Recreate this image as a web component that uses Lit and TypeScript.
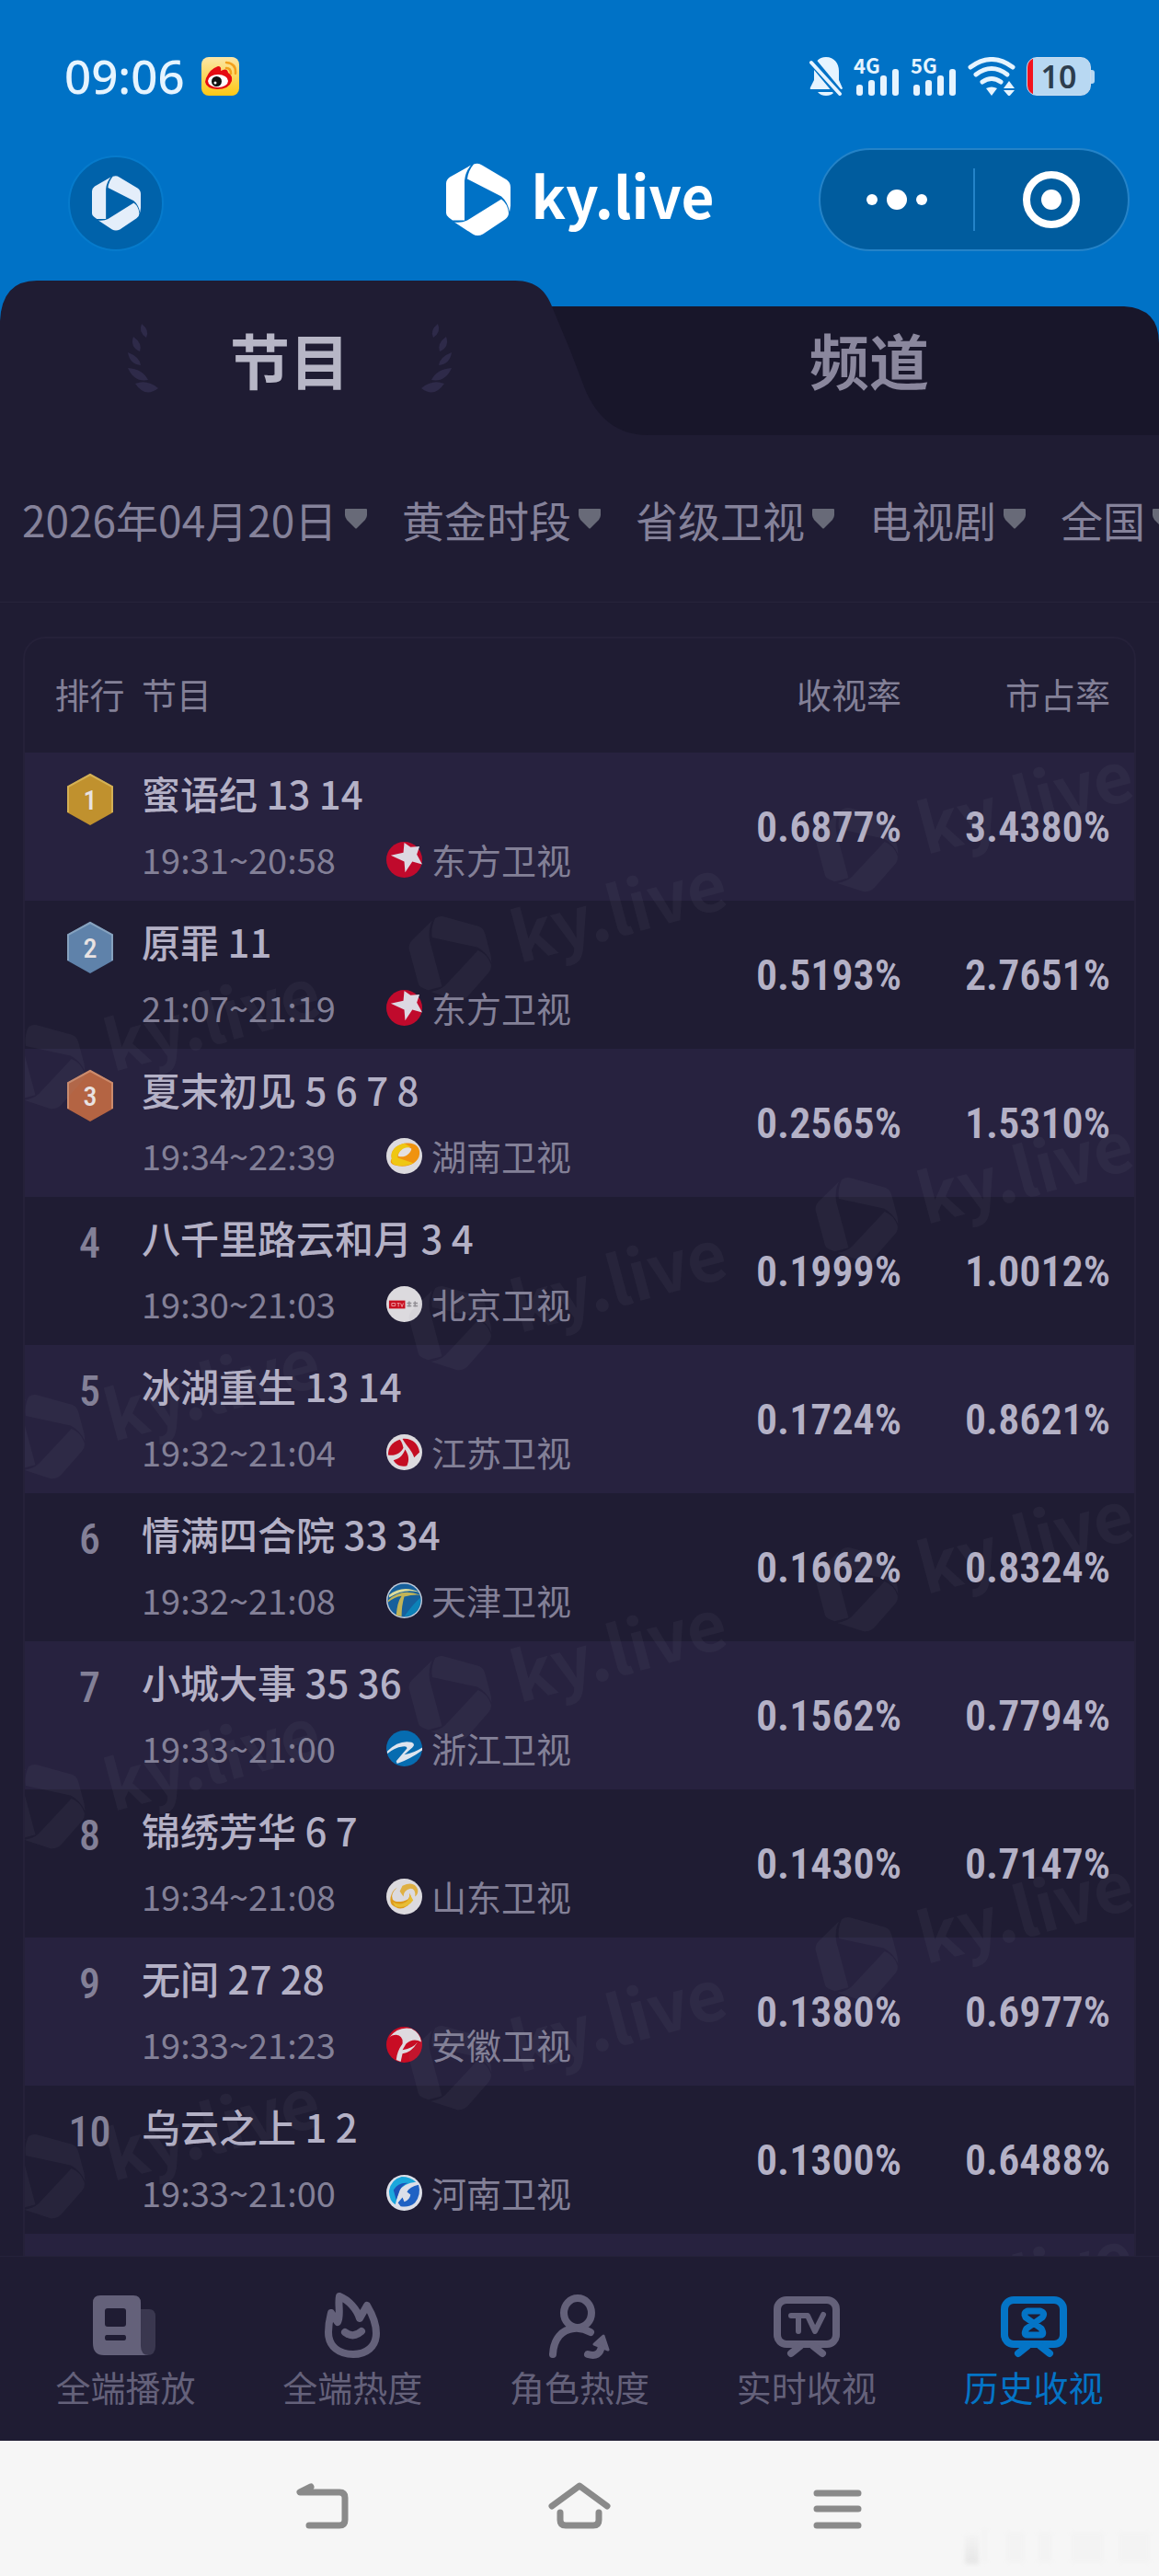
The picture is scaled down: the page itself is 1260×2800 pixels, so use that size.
import { LitElement, html, svg, css } from "lit";
import { customElement, state } from "lit/decorators.js";

interface Show {
  title: string;
  time: string;
  channel: string;
  rate: string;
  share: string;
}

const SHOWS: Show[] = [
  { title: "蜜语纪 13 14", time: "19:31~20:58", channel: "东方卫视", rate: "0.6877%", share: "3.4380%" },
  { title: "原罪 11", time: "21:07~21:19", channel: "东方卫视", rate: "0.5193%", share: "2.7651%" },
  { title: "夏末初见 5 6 7 8", time: "19:34~22:39", channel: "湖南卫视", rate: "0.2565%", share: "1.5310%" },
  { title: "八千里路云和月 3 4", time: "19:30~21:03", channel: "北京卫视", rate: "0.1999%", share: "1.0012%" },
  { title: "冰湖重生 13 14", time: "19:32~21:04", channel: "江苏卫视", rate: "0.1724%", share: "0.8621%" },
  { title: "情满四合院 33 34", time: "19:32~21:08", channel: "天津卫视", rate: "0.1662%", share: "0.8324%" },
  { title: "小城大事 35 36", time: "19:33~21:00", channel: "浙江卫视", rate: "0.1562%", share: "0.7794%" },
  { title: "锦绣芳华 6 7", time: "19:34~21:08", channel: "山东卫视", rate: "0.1430%", share: "0.7147%" },
  { title: "无间 27 28", time: "19:33~21:23", channel: "安徽卫视", rate: "0.1380%", share: "0.6977%" },
  { title: "乌云之上 1 2", time: "19:33~21:00", channel: "河南卫视", rate: "0.1300%", share: "0.6488%" },
];

const FILTERS = [
  { name: "日期", value: "2026年04月20日" },
  { name: "时段", value: "黄金时段" },
  { name: "频道组", value: "省级卫视" },
  { name: "类型", value: "电视剧" },
  { name: "地区", value: "全国" },
];

const MEDALS = [
  { fill: "#c0912e", rim: "#d3b055" },
  { fill: "#5f82aa", rim: "#86a2bf" },
  { fill: "#b46443", rim: "#cc8b6c" },
];

/* Folded-ribbon hexagon, 70 x 79 units */
const markPaths = svg`
  <path d="M27 2 L4 15 Q0 18 0 22 V54 Q0 57 3 59 L7 62 H20 V19 Q21 9 27 2Z"/>
  <path d="M30 1 Q35 -1 39 2 L66 18 Q70 21 70 26 V46 L69 53 Q67 42 60 36 L23 17 Q24 8 30 1Z"/>
  <path d="M60 39 Q67 44 68 54 Q68 58 64 61 L40 77 Q34 80 29 77 L9 64 Q17 65 23 62Z"/>`;

const CHANNEL_ART: Record<string, unknown> = {
  东方卫视: svg`
    <circle cx="20" cy="20" r="20" fill="#c00a2c"/>
    <path d="M20 1 L27 6 L37 5 L34 14 L40 25 L29 22 L21 34 L20 22 L5 15 L19 12Z" fill="#dcd8e2"/>`,
  湖南卫视: svg`
    <circle cx="20" cy="20" r="20" fill="#dcdade"/>
    <path d="M20 6 C32 4 38 10 37 18 C36 28 24 33 13 31 C6 30 3 27 6 23 C4 14 11 8 20 6Z" fill="#f0930f"/>
    <path d="M6 23 C4 14 11 8 20 6 L27 10 C16 12 11 18 13 22 L30 28 C20 33 3 32 6 23Z" fill="#efc713"/>
    <path d="M13 20 C14 13 23 8 28 12 C27 18 19 23 13 20Z" fill="#e4e0e0"/>`,
  北京卫视: svg`
    <circle cx="20" cy="20" r="20" fill="#dcdade"/>
    <rect x="3" y="16" width="18" height="9" fill="#c81020"/>
    <path d="M6 19h4v3h-4z M12 19h3 M13.5 19v4 M16 19l1.5 4l1.5-4" fill="none" stroke="#ec9aa0" stroke-width="1"/>
    <path d="M23 19h5 M25.500 17v6 M23 22h5 M30 19h5 M32 17v6 M30 22h5" stroke="#918e94" stroke-width="1.500"/>`,
  江苏卫视: svg`
    <circle cx="20" cy="20" r="20" fill="#dcdade"/>
    <path d="M15 6 C6 9 2 15 2 23 C9 25 17 20 19 15 C18 11 17 8 15 6Z" fill="#c40d22"/>
    <path d="M18 5 C29 4 36 11 37 20 L31 26 C29 18 23 14 18 5Z" fill="#c40d22"/>
    <path d="M8 29 C16 27 19 22 21 17 C25 23 26 29 23 35 C16 37 11 34 8 29Z" fill="#c40d22"/>`,
  天津卫视: svg`
    <circle cx="20" cy="20" r="20" fill="#c3cddc"/>
    <circle cx="20" cy="20" r="18.500" fill="#17609c"/>
    <path d="M20 38 A18 18 0 0 0 38 17 Q30 24 20 38Z" fill="#0c82b8"/>
    <path d="M3 14 Q18 2 37 11 Q20 6 3 17Z" fill="#dcdc9a"/>
    <path d="M2 20 Q16 6 38 14 Q30 13 20 16 Q17 26 17 38 L11 37 Q12 22 17 15 Q9 16 2 22Z" fill="#c2b457"/>`,
  浙江卫视: svg`
    <circle cx="20" cy="20" r="20" fill="#066cb0"/>
    <path d="M1 23 Q14 10 28 13 Q33 15 29 19 L20 27 Q31 25 40 19 V22 Q28 31 12 37 L11 34 L23 20 Q23 17 18 18 Q9 19 1 26Z" fill="#dde4ee"/>`,
  山东卫视: svg`
    <circle cx="20" cy="20" r="20" fill="#dcdade"/>
    <path d="M12 10 Q4 17 7 23 Q10 27 19 25 Q27 24 26 16 Q30 24 24 30 Q15 37 6 29 Q3 24 6 17 Q8 12 12 10Z" fill="#dd9a1c"/>
    <path d="M7 26 Q14 30 20 27 Q27 24 26 17 L30 24 Q23 34 10 31Z" fill="#e7bd35"/>
    <path d="M18 8 Q31 2 35 12 Q36 17 32 20 Q33 11 27 11 Q19 13 19 20 L15 14Z" fill="#dfb043"/>`,
  安徽卫视: svg`
    <circle cx="20" cy="20" r="20" fill="#c80c24"/>
    <path d="M3 12 Q13 -1 28 2 Q38 7 39 17 Q30 12 22 19 L18 26 Q30 24 35 17 Q28 29 18 30 L16 39 L11 37 Q12 27 18 19 Q19 10 11 9 Q6 9 3 12Z" fill="#dedadf"/>`,
  河南卫视: svg`
    <circle cx="20" cy="20" r="20" fill="#dcdfe8"/>
    <path d="M17 2 Q5 5 3 18 Q3 29 10 33 L14 18 Q20 9 33 8 Q27 2 17 2Z" fill="#1aa7dc"/>
    <path d="M36 11 Q39 22 32 31 Q25 37 16 35 L13 31 L18 25 L20 30 Q26 28 27 22 L23 19 Q26 13 36 11Z" fill="#1f62c4"/>
    <path d="M8 17 Q13 8 24 9 Q16 12 14 20 L11 28Z" fill="#1c52b8"/>`,
};

const NAV = [
  {
    label: "全端播放",
    art: svg`
      <path d="M52 20 H62 Q69 20 69 28 V60 Q69 70 60 70 H50Z" fill="currentColor" opacity=".4"/>
      <path fill-rule="evenodd" d="M9 5 H45 Q53 5 53 13 V60 Q53 70 62 70 H13 Q1 70 1 57 V13 Q1 5 9 5Z
        M17 19 Q14 19 14 22 V36 Q14 39 17 39 H34 Q37 39 37 36 V22 Q37 19 34 19Z
        M16 48 Q14 48 14 51 Q14 54 16 54 H35 Q37 54 37 51 Q37 48 35 48Z" fill="currentColor"/>`,
  },
  {
    label: "全端热度",
    art: svg`
      <g fill="none" stroke="currentColor" stroke-width="8" stroke-linecap="round" stroke-linejoin="round">
        <path d="M22 6 C32 10 41 20 44 30 L52 16 C58 26 62 37 62 46 C62 61 51 69 37 69 C22 69 10 61 10 45 C10 35 12 28 13 24 L20 34 C24 27 20 14 22 6Z"/>
        <path d="M28 45 Q37 52 46 44"/>
      </g>`,
  },
  {
    label: "角色热度",
    art: svg`
      <g fill="none" stroke="currentColor" stroke-width="8" stroke-linecap="round" stroke-linejoin="round">
        <ellipse cx="34" cy="24" rx="15" ry="16"/>
        <path d="M7 69 C8 52 17 42 30 41 Q39 40 48 45"/>
        <path d="M45 69 Q58 73 60 60"/>
      </g>
      <path d="M62 49 L67 64 L52 58Z" fill="currentColor" stroke="currentColor" stroke-width="3" stroke-linejoin="round"/>`,
  },
  {
    label: "实时收视",
    art: svg`
      <g fill="none" stroke="currentColor" stroke-linecap="round" stroke-linejoin="round">
        <rect x="4" y="10" width="64" height="48" rx="10" stroke-width="8"/>
        <path d="M29 60 L19 68 M43 60 L53 68" stroke-width="8"/>
        <path d="M19 27 H36 M27 27 V44 M37 27 L45 44 L54 26" stroke-width="6"/>
      </g>`,
  },
  {
    label: "历史收视",
    art: svg`
      <g fill="none" stroke="currentColor" stroke-linecap="round" stroke-linejoin="round">
        <rect x="4" y="10" width="64" height="48" rx="10" stroke-width="8"/>
        <path d="M29 60 L19 68 M43 60 L53 68" stroke-width="8"/>
        <path d="M29 22 H43 Q49 24 45 29 L28 41 Q24 48 29 48 H43 Q48 48 44 41 L27 29 Q24 24 29 22Z" stroke-width="7"/>
      </g>`,
  },
];

@customElement("brand-mark")
export class BrandMark extends LitElement {
  static styles = css`
    :host { display: block; }
    svg { display: block; width: 100%; height: 100%; fill: currentColor; }
  `;
  render() {
    return html`<svg viewBox="0 0 70 79" aria-hidden="true">${markPaths}</svg>`;
  }
}

@customElement("status-bar")
export class StatusBar extends LitElement {
  static styles = css`
    :host {
      display: flex;
      align-items: center;
      justify-content: space-between;
      height: 156px;
      padding: 5px 70px 0;
      color: #e6f4ff;
    }
    .side { display: flex; align-items: center; gap: 12px; }
    .clock { font: 500 51px/56px "Noto Sans", "Open Sans", sans-serif; padding-bottom: 2px; }
    .app { margin-left: 6px; }
    svg { display: block; }
    .net {
      display: grid;
      font: 700 22px/22px "Noto Sans CJK SC", sans-serif;
    }
    .net span, .net svg { grid-area: 1 / 1; }
    .net span { align-self: start; margin-top: -3px; }
    .battery { display: flex; align-items: center; }
    .cell {
      display: grid;
      place-items: center;
      width: 70px;
      height: 42px;
      box-sizing: border-box;
      border-radius: 11px;
      background: linear-gradient(90deg, #f2121e 6px, #b8d8f2 6px);
      border: 1px solid #c9dcf0;
      color: #2d3d4e;
      font: 600 34px/40px "Noto Sans", sans-serif;
    }
    .nub { width: 4px; height: 15px; border-radius: 0 3px 3px 0; background: #b8d8f2; }
  `;

  private network(label: string) {
    return html`
      <div class="net">
        <span>${label}</span>
        <svg width="50" height="42" viewBox="0 0 50 42" fill="currentColor" aria-hidden="true">
          <rect x="3" y="30" width="7" height="12" rx="3"/>
          <rect x="16" y="25" width="7" height="17" rx="3"/>
          <rect x="29" y="20" width="7" height="22" rx="3"/>
          <rect x="42" y="13" width="7" height="29" rx="3"/>
        </svg>
      </div>`;
  }

  render() {
    return html`
      <div class="side">
        <span class="clock">09:06</span>
        <svg class="app" width="41" height="42" viewBox="0 0 41 42" aria-hidden="true">
          <defs>
            <linearGradient id="wb" x1="0" y1="0" x2="0" y2="1">
              <stop offset="0" stop-color="#fbe6a8"/><stop offset="1" stop-color="#fdc813"/>
            </linearGradient>
          </defs>
          <rect width="41" height="42" rx="8" fill="url(#wb)"/>
          <path d="M5 23 Q9 13 18 10 Q22 10 21 15 Q28 11 29 17 Q34 20 33 26 Q30 35 17 35 Q5 34 4 27Z" fill="#e50b12"/>
          <ellipse cx="18" cy="26" rx="11" ry="7" fill="#fff"/>
          <circle cx="16.500" cy="26.500" r="5.500" fill="#111"/>
          <circle cx="15" cy="28" r="1.500" fill="#fff"/>
          <path d="M27 6 Q38 7 37 18 M27 12 Q32 12 32 18" fill="none" stroke="#f3a01c" stroke-width="2.500" stroke-linecap="round"/>
        </svg>
      </div>
      <div class="side">
        <svg width="36" height="42" viewBox="0 0 36 42" aria-hidden="true">
          <path d="M18 0 C27 0 32 7 32 15 V25 L36 34 Q36 35 34 35 H2 Q0 35 1 33 L5 25 V13 C5 6 10 0 18 0Z M9 38 H27 Q24 42 18 42 Q12 42 9 38Z" fill="currentColor"/>
          <path d="M0 1 L35 43" stroke="#0072c6" stroke-width="9"/>
          <path d="M2 6 L33 40" stroke="currentColor" stroke-width="4" stroke-linecap="round"/>
        </svg>
        ${this.network("4G")}
        ${this.network("5G")}
        <svg width="52" height="42" viewBox="0 0 52 42" aria-hidden="true">
          <g fill="none" stroke="currentColor" stroke-width="5" stroke-linecap="round">
            <path d="M3 11 Q26 -6 49 11"/>
            <path d="M9 19 Q26 6 43 19"/>
            <path d="M16 27 Q26 20 36 27"/>
          </g>
          <path d="M20 34 Q26 31 32 34 L26 42Z M39 34 L45 26 L51 34Z M39 36 H51 L45 43Z" fill="currentColor"/>
        </svg>
        <div class="battery"><div class="cell">10</div><div class="nub"></div></div>
      </div>`;
  }
}

@customElement("ranking-table")
export class RankingTable extends LitElement {
  static styles = css`
    :host {
      display: block;
      position: relative;
      overflow: hidden;
      border: 2px solid #252139;
      border-bottom: 0;
      border-radius: 24px 24px 0 0;
      color: #b4b1c6;
    }
    table { width: 100%; border-collapse: collapse; table-layout: fixed; }
    th, td { box-sizing: border-box; padding: 0; }
    .c-rank { width: 127px; }
    .c-rate { width: 220px; }
    .c-share { width: 253px; }
    th {
      height: 124px;
      padding-bottom: 4px;
      font-size: 38px;
      font-weight: 400;
      line-height: 56px;
      text-align: left;
      color: #838097;
    }
    td { height: 161px; vertical-align: top; }
    tbody tr:nth-child(odd) { background: #27223f; }
    .rank { padding-left: 14px; text-align: center; }
    .num { text-align: right; }
    .share { padding-right: 26px; }
    td.rank { padding-top: 22px; }
    td.num {
      vertical-align: middle;
      font: 600 46px/56px "Roboto Condensed", "Liberation Sans Narrow", Roboto, sans-serif;
    }
    .place {
      display: block;
      font: 500 46px/56px "Roboto Condensed", "Liberation Sans Narrow", Roboto, sans-serif;
      color: #838097;
    }
    .medal { display: block; margin: 0 auto; }
    .medal text { font: 500 30px "Roboto Condensed", Roboto, sans-serif; fill: #e8e2e2; text-anchor: middle; }
    td.show { padding-top: 14px; }
    .title { font-size: 42px; font-weight: 500; line-height: 60px; white-space: nowrap; }
    .meta {
      display: flex;
      align-items: center;
      margin-top: 12px;
      font-size: 38px;
      line-height: 60px;
      color: #838097;
      white-space: nowrap;
    }
    .time { width: 266px; }
    .logo { display: block; width: 39px; height: 39px; margin-right: 10px; }
    .watermark {
      position: absolute;
      inset: 0;
      width: 100%;
      height: 100%;
      fill: #8f92a0;
      opacity: 0.07;
      pointer-events: none;
    }
    .watermark text { font: 700 62px "Noto Sans CJK SC", sans-serif; }
  `;

  private place(i: number) {
    const medal = MEDALS[i];
    if (!medal) return html`<span class="place">${i + 1}</span>`;
    return html`
      <svg class="medal" width="52" height="58" viewBox="0 0 52 58">
        <path d="M26 1 L51 15 V43 L26 57 L1 43 V15Z" fill="${medal.fill}"/>
        <path d="M2 43 V15 L26 2 L50 15 V43" fill="none" stroke="${medal.rim}" stroke-width="2"/>
        <text x="26" y="40">${i + 1}</text>
      </svg>`;
  }

  private stamps() {
    const out = [];
    for (let row = 0; row < 5; row++) {
      for (let col = 0; col < 3; col++) {
        const x = 22 + col * 442;
        const y = 466 - col * 118 + row * 402;
        out.push(svg`
          <g transform="translate(${x} ${y}) rotate(-15) scale(1.2)">
            <g transform="translate(-35 -40)">${markPaths}</g>
            <text x="58" y="20">ky.live</text>
          </g>`);
      }
    }
    return out;
  }

  render() {
    return html`
      <table>
        <colgroup>
          <col class="c-rank" /><col /><col class="c-rate" /><col class="c-share" />
        </colgroup>
        <thead>
          <tr>
            <th class="rank" scope="col">排行</th>
            <th scope="col">节目</th>
            <th class="num" scope="col">收视率</th>
            <th class="num share" scope="col">市占率</th>
          </tr>
        </thead>
        <tbody>
          ${SHOWS.map(
            (s, i) => html`
              <tr>
                <td class="rank">${this.place(i)}</td>
                <td class="show">
                  <div class="title">${s.title}</div>
                  <div class="meta">
                    <span class="time">${s.time}</span>
                    <svg class="logo" viewBox="0 0 40 40" aria-hidden="true">${CHANNEL_ART[s.channel]}</svg>
                    <span>${s.channel}</span>
                  </div>
                </td>
                <td class="num">${s.rate}</td>
                <td class="num share">${s.share}</td>
              </tr>`
          )}
          <tr aria-hidden="true"><td colspan="4"></td></tr>
        </tbody>
      </table>
      <svg class="watermark" aria-hidden="true">${this.stamps()}</svg>`;
  }
}

@customElement("app-root")
export class AppRoot extends LitElement {
  static styles = css`
    :host {
      display: flex;
      flex-direction: column;
      height: 100vh;
      overflow: hidden;
      background: #1f1c33;
      color: #b4b1c6;
      font-family: "Noto Sans CJK SC", sans-serif;
    }
    button, select { font: inherit; color: inherit; background: none; border: 0; padding: 0; margin: 0; }
    svg { display: block; }
    .top { flex: none; background: #0072c6; color: #fff; }
    .bar {
      display: grid;
      grid-template-columns: 1fr auto 1fr;
      align-items: center;
      height: 112px;
      padding: 0 32px 0 74px;
      margin-bottom: 32px;
    }
    .home {
      display: grid;
      place-items: center;
      align-self: end;
      width: 104px;
      height: 104px;
      box-sizing: border-box;
      border: 2px solid #067bcc;
      border-radius: 50%;
      background: #0062aa;
      color: #e4eefa;
    }
    .home brand-mark { width: 53px; height: 60px; }
    .brand { display: flex; align-items: center; gap: 22px; margin-right: 40px; }
    .brand brand-mark { width: 70px; height: 80px; }
    .brand span { font-size: 62px; font-weight: 700; line-height: 80px; padding-bottom: 12px; }
    .capsule {
      justify-self: end;
      display: flex;
      align-items: center;
      box-sizing: border-box;
      width: 338px;
      height: 112px;
      border: 2px solid #2483c8;
      border-radius: 56px;
      background: #005c9e;
    }
    .capsule button { flex: 1; display: grid; place-items: center; height: 100%; }
    .rule { width: 2px; height: 68px; background: #2483c8; }
    .tabs { position: relative; display: grid; grid-template-columns: 1fr 1fr; height: 168px; }
    .shape { position: absolute; inset: 0; width: 100%; height: 100%; }
    .tab {
      position: relative;
      display: flex;
      align-items: center;
      justify-content: center;
      gap: 78px;
      padding-top: 2px;
      font-size: 65px;
      font-weight: 700;
      line-height: 80px;
      color: #8a879d;
    }
    .tab[aria-selected="true"] { color: #b7b6c6; }
    .right { transform: scaleX(-1); }
    .filters {
      flex: none;
      display: flex;
      align-items: center;
      gap: 38px;
      height: 181px;
      padding-left: 24px;
      overflow: hidden;
      border-bottom: 1px solid #27243b;
    }
    .filter { flex: none; display: flex; align-items: center; gap: 8px; color: #85829a; }
    .filter select { appearance: none; font-size: 46px; line-height: 64px; height: 64px; padding-bottom: 2px; }
    .list { flex: 1; min-height: 0; overflow: hidden; padding: 37px 25px 0; }
    .nav {
      flex: none;
      display: grid;
      grid-template-columns: repeat(5, 1fr);
      height: 200px;
      padding: 0 13px;
      border-top: 1px solid #25223a;
    }
    .nav a {
      display: flex;
      flex-direction: column;
      align-items: center;
      padding-top: 37px;
      color: #64617a;
      font-size: 38px;
      line-height: 56px;
      text-decoration: none;
    }
    .nav a[aria-current="page"] { color: #0474c6; }
    .system {
      flex: none;
      position: relative;
      display: flex;
      align-items: center;
      justify-content: center;
      gap: 208px;
      height: 147px;
      background: #f6f6f6;
      color: #8a8a8a;
    }
    .system button { margin-bottom: 6px; }
    .smear { position: absolute; right: 0; bottom: 10px; opacity: 0.4; }
  `;

  @state() private tab = 0;
  @state() private page = 4;

  private laurel(side: string) {
    return html`
      <svg class=${side} width="36" height="78" viewBox="0 0 36 78" fill="#2e2a49" aria-hidden="true">
        <path d="M18 1 Q27 8 23 16 Q14 10 18 1Z"/>
        <path d="M9 15 Q19 22 16 31 Q5 26 9 15Z"/>
        <path d="M3 32 Q16 37 17 46 Q5 45 3 32Z"/>
        <path d="M3 49 Q19 50 25 62 Q10 65 3 49Z"/>
        <path d="M11 66 Q24 61 36 71 Q22 82 11 66Z"/>
      </svg>`;
  }

  render() {
    return html`
      <header class="top">
        <status-bar></status-bar>
        <div class="bar">
          <button class="home" aria-label="主页"><brand-mark></brand-mark></button>
          <div class="brand"><brand-mark></brand-mark><span>ky.live</span></div>
          <div class="capsule">
            <button aria-label="更多">
              <svg width="66" height="22" viewBox="0 0 66 22" fill="#fff">
                <circle cx="6" cy="11" r="6"/><circle cx="33" cy="11" r="11"/><circle cx="60" cy="11" r="6"/>
              </svg>
            </button>
            <span class="rule"></span>
            <button aria-label="关闭">
              <svg width="62" height="62" viewBox="0 0 62 62">
                <circle cx="31" cy="31" r="27" fill="none" stroke="#fff" stroke-width="8"/>
                <circle cx="31" cy="31" r="11" fill="#fff"/>
              </svg>
            </button>
          </div>
        </div>
        <div class="tabs" role="tablist">
          <svg class="shape" viewBox="0 0 1260 168" preserveAspectRatio="none" aria-hidden="true">
            <path d="M540 28 H1222 Q1260 30 1260 68 V168 H540Z" fill="#18162a"/>
            <path d="M0 44 Q2 0 40 0 H560 C583 0 594 12 600 28 L620 76 L636 118 C648 146 668 168 705 168 H0Z" fill="#1f1c33"/>
          </svg>
          <button class="tab" role="tab" aria-selected=${this.tab === 0} @click=${() => (this.tab = 0)}>
            ${this.laurel("left")}<span>节目</span>${this.laurel("right")}
          </button>
          <button class="tab" role="tab" aria-selected=${this.tab === 1} @click=${() => (this.tab = 1)}>频道</button>
        </div>
      </header>
      <div class="filters">
        ${FILTERS.map(
          (f) => html`
            <label class="filter">
              <select aria-label=${f.name}><option>${f.value}</option></select>
              <svg width="24" height="22" viewBox="0 0 24 22" fill="#686a78" aria-hidden="true">
                <path d="M1 0 H23 Q24 0 24 1 V7 Q24 9 22 12 L13 21 Q12 22 11 21 L2 12 Q0 9 0 7 V1 Q0 0 1 0Z"/>
              </svg>
            </label>`
        )}
      </div>
      <main class="list"><ranking-table></ranking-table></main>
      <nav class="nav">
        ${NAV.map(
          (n, i) => html`
            <a href="#${i}" aria-current=${this.page === i ? "page" : "false"} @click=${() => (this.page = i)}>
              <svg width="72" height="76" viewBox="0 0 72 76" aria-hidden="true">${n.art}</svg>
              ${n.label}
            </a>`
        )}
      </nav>
      <footer class="system">
        <button aria-label="返回">
          <svg width="72" height="56" viewBox="0 0 72 56" fill="none" stroke="currentColor" stroke-width="7" stroke-linecap="round" stroke-linejoin="round">
            <path d="M24 7 L12 13 H55 Q61 13 61 19 V43 Q61 49 55 49 H22"/>
          </svg>
        </button>
        <button aria-label="桌面">
          <svg width="72" height="56" viewBox="0 0 72 56" fill="none" stroke="currentColor" stroke-width="7" stroke-linecap="round" stroke-linejoin="round">
            <path d="M6 28 L36 6 L66 28 M15 35 V43 Q15 49 21 49 H51 Q57 49 57 43 V35"/>
          </svg>
        </button>
        <button aria-label="任务">
          <svg width="72" height="56" viewBox="0 0 72 56" fill="none" stroke="currentColor" stroke-width="7" stroke-linecap="round">
            <path d="M14 14 H59 M14 31 H59 M14 49 H59"/>
          </svg>
        </button>
        <svg class="smear" width="216" height="44" viewBox="0 0 216 44" aria-hidden="true">
          <defs>
            <filter id="soft"><feGaussianBlur stdDeviation="2"/></filter>
            <linearGradient id="fade" x1="0" y1="0" x2="0" y2="1">
              <stop offset="0" stop-color="#f2f2f2"/><stop offset="1" stop-color="#cfcfcf"/>
            </linearGradient>
          </defs>
          <g filter="url(#soft)" fill="#efefef">
            <rect x="5" y="8" width="15" height="33" fill="url(#fade)"/>
            <rect x="24" y="2" width="5" height="38"/>
            <rect x="50" y="6" width="20" height="34"/>
            <rect x="84" y="6" width="16" height="34"/>
            <rect x="120" y="6" width="36" height="34"/>
            <rect x="172" y="6" width="34" height="34"/>
          </g>
        </svg>
      </footer>`;
  }
}
